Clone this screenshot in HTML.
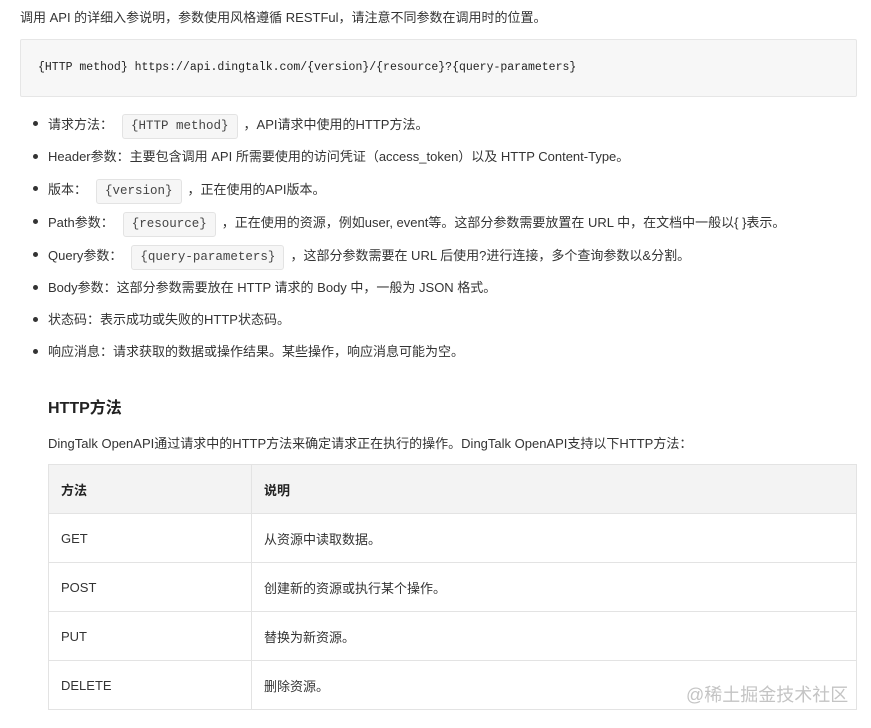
<!DOCTYPE html>
<html><head><meta charset="utf-8"><style>
body{margin:0;width:871px;height:728px;background:#fff;position:relative;font-family:"Liberation Sans","Noto Sans CJK SC",sans-serif;font-size:13px;color:#333;overflow:hidden}
.a{position:absolute;white-space:nowrap;line-height:20px}
.code{position:absolute;left:20px;top:39px;width:835px;height:56px;background:#f7f7f7;border:1px solid #e6e6e6;border-radius:2px}
.code span{position:absolute;left:17px;top:18px;font-family:"Liberation Mono","Noto Serif CJK SC",monospace;font-size:11.5px;color:#222;line-height:20px}
.ic{display:inline-block;background:#f6f6f6;border:1px solid #e3e3e3;border-radius:3px;font-family:"Liberation Mono",monospace;font-size:12.5px;padding:0 8px;line-height:23px;margin:0 6px 0 9px;color:#444}
.dot{position:absolute;left:33px;width:5px;height:5px;border-radius:50%;background:#333}
h3{position:absolute;left:48px;top:398px;margin:0;font-size:16px;font-weight:bold;color:#222;line-height:22px}
table{position:absolute;left:48px;top:464px;width:809px;border-collapse:collapse}
td,th{border:1px solid #e3e3e3;height:48px;padding:0 12px;text-align:left;font-size:13px;color:#333}
th{background:#f3f3f3;font-weight:bold;color:#222}
.wm{position:absolute;left:686px;top:684px;font-size:18px;color:#c4c4c4;line-height:22px}
</style></head><body>
<div class="a" style="left:20px;top:8px">调用 API 的详细入参说明，参数使用风格遵循 RESTFul，请注意不同参数在调用时的位置。</div>
<div class="code"><span>{HTTP method} https://api.dingtalk.com/{version}/{resource}?{query-parameters}</span></div>

<div class="dot" style="top:121px"></div><div class="a" style="left:48px;top:114px">请求方法：<span class="ic">{HTTP method}</span>，API请求中使用的HTTP方法。</div>
<div class="dot" style="top:154px"></div><div class="a" style="left:48px;top:147px">Header参数：主要包含调用 API 所需要使用的访问凭证（access_token）以及 HTTP Content-Type。</div>
<div class="dot" style="top:186px"></div><div class="a" style="left:48px;top:179px">版本：<span class="ic">{version}</span>，正在使用的API版本。</div>
<div class="dot" style="top:219px"></div><div class="a" style="left:48px;top:212px">Path参数：<span class="ic">{resource}</span>，正在使用的资源，例如user, event等。这部分参数需要放置在 URL 中，在文档中一般以{ }表示。</div>
<div class="dot" style="top:252px"></div><div class="a" style="left:48px;top:245px">Query参数：<span class="ic">{query-parameters}</span>，这部分参数需要在 URL 后使用?进行连接，多个查询参数以&amp;分割。</div>
<div class="dot" style="top:285px"></div><div class="a" style="left:48px;top:278px">Body参数：这部分参数需要放在 HTTP 请求的 Body 中，一般为 JSON 格式。</div>
<div class="dot" style="top:317px"></div><div class="a" style="left:48px;top:310px">状态码：表示成功或失败的HTTP状态码。</div>
<div class="dot" style="top:349px"></div><div class="a" style="left:48px;top:342px">响应消息：请求获取的数据或操作结果。某些操作，响应消息可能为空。</div>

<h3>HTTP方法</h3>
<div class="a" style="left:48px;top:434px">DingTalk OpenAPI通过请求中的HTTP方法来确定请求正在执行的操作。DingTalk OpenAPI支持以下HTTP方法：</div>
<table>
<tr><th style="width:178px">方法</th><th>说明</th></tr>
<tr><td>GET</td><td>从资源中读取数据。</td></tr>
<tr><td>POST</td><td>创建新的资源或执行某个操作。</td></tr>
<tr><td>PUT</td><td>替换为新资源。</td></tr>
<tr><td>DELETE</td><td>删除资源。</td></tr>
</table>
<div class="wm">@稀土掘金技术社区</div>
</body></html>
